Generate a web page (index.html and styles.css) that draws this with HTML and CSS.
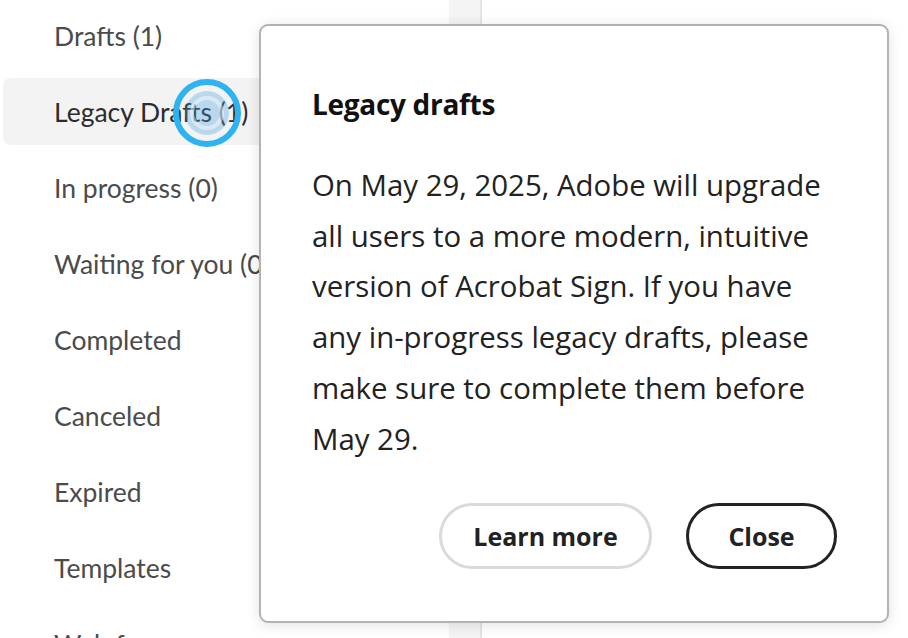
FILE: index.html
```html
<!DOCTYPE html>
<html lang="en">
<head>
<meta charset="utf-8">
<title>Legacy drafts</title>
<link rel="stylesheet" href="styles.css">
</head>
<body>
<div class="page">
  <nav class="sidebar">
    <ul class="nav-list">
      <li class="nav-item">Drafts (1)</li>
      <li class="nav-item active">Legacy Drafts (1)</li>
      <li class="nav-item">In progress (0)</li>
      <li class="nav-item">Waiting for you (0)</li>
      <li class="nav-item">Completed</li>
      <li class="nav-item">Canceled</li>
      <li class="nav-item">Expired</li>
      <li class="nav-item">Templates</li>
      <li class="nav-item">Web forms</li>
    </ul>
  </nav>
  <div class="rail"></div>
  <main class="content"></main>

  <svg class="cursor" width="76" height="76" viewBox="0 0 76 76" aria-hidden="true">
    <circle cx="38" cy="38" r="22" fill="rgba(70,160,225,0.33)"/>
    <circle cx="38" cy="38" r="15" fill="none" stroke="rgba(255,255,255,0.45)" stroke-width="4"/>
    <circle cx="38" cy="38" r="31" fill="none" stroke="#2eb3f0" stroke-width="6"/>
  </svg>

  <section class="popover" role="dialog" aria-labelledby="pt">
    <h2 class="pop-title" id="pt">Legacy drafts</h2>
    <p class="pop-body">On May 29, 2025, Adobe will upgrade<br>all users to a more modern, intuitive<br>version of Acrobat Sign. If you have<br>any in-progress legacy drafts, please<br>make sure to complete them before<br>May 29.</p>
    <div class="pop-actions">
      <button class="btn btn-secondary">Learn more</button>
      <button class="btn btn-primary">Close</button>
    </div>
  </section>
</div>
</body>
</html>
```

FILE: styles.css
```css
* { box-sizing: border-box; }
html, body { margin: 0; padding: 0; }
body {
  width: 908px;
  height: 638px;
  overflow: hidden;
  background: #ffffff;
  font-family: "Lato", "Open Sans", sans-serif;
  color: #222;
}
.page {
  position: relative;
  display: flex;
  width: 908px;
  height: 638px;
  overflow: hidden;
}
.sidebar {
  width: 449px;
  flex: none;
  overflow: hidden;
}
.nav-list {
  list-style: none;
  margin: 0;
  padding: 2px 0 0 3px;
  display: flex;
  flex-direction: column;
  gap: 9px;
}
.nav-item {
  height: 67px;
  flex: none;
  display: flex;
  align-items: center;
  padding-left: 51px;
  font-size: 26.5px;
  color: #4b4b4b;
  border-radius: 8px;
  white-space: nowrap;
  width: 420px;
}
.nav-item.active {
  background: #f3f3f3;
  color: #2c2c2c;
}
.rail {
  width: 33px;
  flex: none;
  background: #f4f4f4;
  border-right: 2px solid #e4e4e4;
}
.content {
  flex: 1;
  background: #fff;
}
.cursor {
  position: absolute;
  left: 169px;
  top: 75px;
}
.popover {
  position: absolute;
  left: 259px;
  top: 24px;
  width: 630px;
  height: 599px;
  background: #fff;
  border: 2px solid #b3b3b3;
  border-radius: 9px;
  box-shadow: 0 2px 14px rgba(0,0,0,0.12);
  padding: 58px 50px 52px 51px;
  display: flex;
  flex-direction: column;
  font-family: "Open Sans", "Lato", sans-serif;
}
.pop-title {
  margin: 0;
  font-size: 28px;
  font-weight: 700;
  color: #111;
  line-height: 40px;
  letter-spacing: -0.3px;
}
.pop-body {
  margin: 36px 0 0 0;
  font-size: 29.4px;
  line-height: 50.7px;
  color: #222;
  white-space: nowrap;
}
.pop-actions {
  margin-top: auto;
  display: flex;
  justify-content: flex-end;
  gap: 34px;
}
.btn {
  height: 66px;
  border-radius: 33px;
  background: #fff;
  font-family: inherit;
  font-size: 25px;
  font-weight: 700;
  color: #222;
  cursor: pointer;
  padding: 0;
}
.btn-secondary {
  width: 213px;
  border: 3px solid #dadada;
}
.btn-primary {
  width: 151px;
  border: 3px solid #222;
}
```
